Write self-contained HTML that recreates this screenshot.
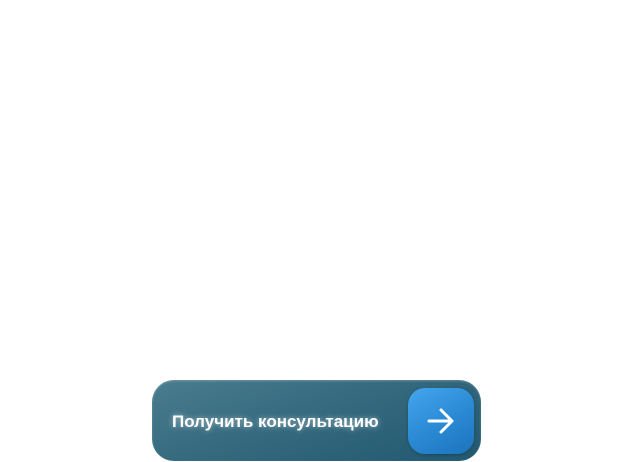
<!DOCTYPE html>
<html><head><style>
html,body{margin:0;padding:0;background:#fff;width:632px;height:462px;overflow:hidden}
.btn{position:absolute;left:152px;top:380px;width:329px;height:81px;border-radius:22px;
background:linear-gradient(160deg,#4a7c8e 0%,#356a7f 45%,#225870 100%);
box-shadow:inset 0 1px 2px rgba(255,255,255,.25)}
.t{position:absolute;left:20px;top:32px;font:bold 17px "Liberation Sans",sans-serif;color:#fff;
text-shadow:0 0 6px rgba(255,255,255,.55)}
.ic{position:absolute;left:256px;top:8px;width:66px;height:66px;border-radius:17px;
background:linear-gradient(150deg,#44a6ee 0%,#2c8bd6 50%,#1c73bb 100%);
box-shadow:0 1px 3px rgba(0,0,0,.25)}
.ic svg{position:absolute;left:19px;top:20px}
</style></head><body>
<div class="btn"><div class="t">Получить консультацию</div>
<div class="ic"><svg width="28" height="26" viewBox="0 0 28 26"><path d="M2 13H25M14 2L25 13L14 24" fill="none" stroke="#fff" stroke-width="3" stroke-linecap="round" stroke-linejoin="round"/></svg></div></div>
</body></html>
